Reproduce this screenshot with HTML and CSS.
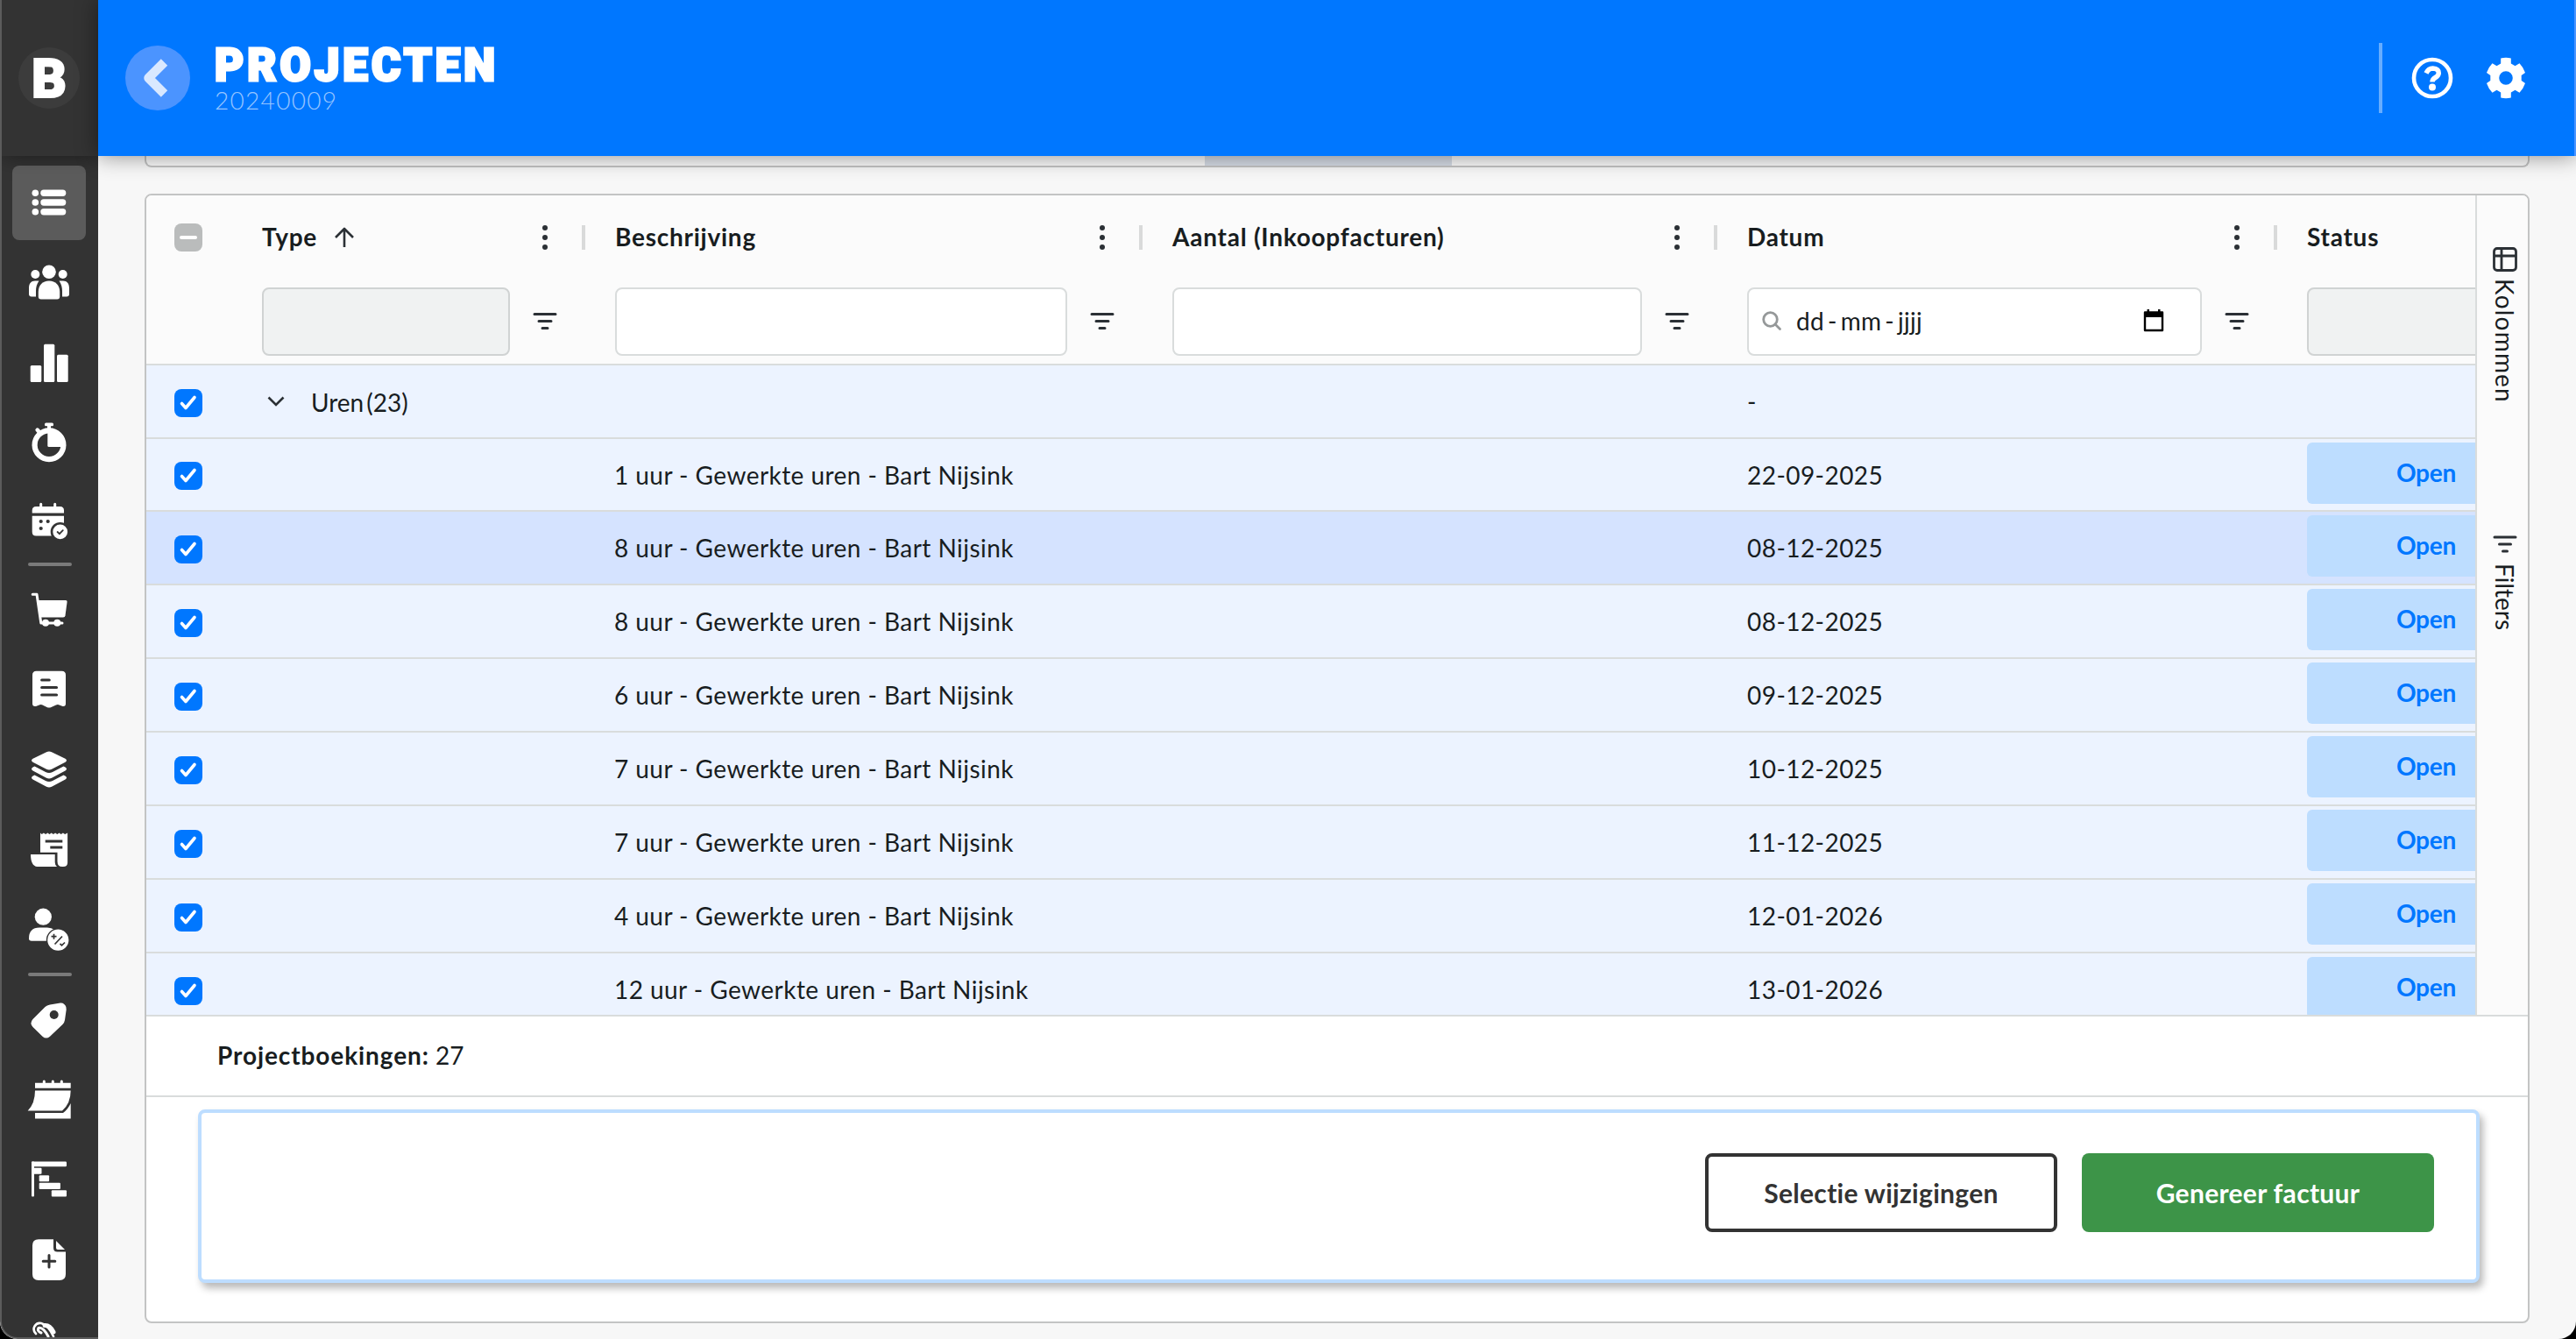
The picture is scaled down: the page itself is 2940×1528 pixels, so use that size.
FILE: index.html
```html
<!DOCTYPE html>
<html lang="nl">
  <head>
    <meta charset="utf-8" />
    <meta name="viewport" content="width=device-width, initial-scale=1" />
    <title>Projecten - 20240009</title>
    <link rel="stylesheet" href="styles.css">
  </head>
  <body>
    <!-- Shared icons -->
    <svg class="icon-defs" xmlns="http://www.w3.org/2000/svg">
      <symbol id="icon-check" viewBox="0 0 32 32">
        <path d="M8.5 16.5l4.5 5 10-12" fill="none" stroke="#fff" stroke-width="3.6" stroke-linecap="round" stroke-linejoin="round"></path>
      </symbol>
      <symbol id="icon-menu" viewBox="0 0 32 32">
        <g fill="#2b3035"><circle cx="16" cy="5" r="3"></circle><circle cx="16" cy="16" r="3"></circle><circle cx="16" cy="27" r="3"></circle></g>
      </symbol>
      <symbol id="icon-filter" viewBox="0 0 32 32">
        <path d="M4 8.5h24M9 16.5h14M13 24.5h6" fill="none" stroke="#2b3035" stroke-width="3" stroke-linecap="round"></path>
      </symbol>
    </svg>

    <div class="app">
      <aside class="sidebar">
        <div class="brand"><div class="brand-logo">B</div></div>
        <nav class="nav">
          <a class="nav-item active">
            <svg viewBox="0 0 84 84"><circle cx="26.3" cy="31.3" r="3.8"/><circle cx="26.3" cy="42" r="3.8"/><circle cx="26.3" cy="52.7" r="3.8"/><rect x="32.3" y="27.6" width="29" height="7.4" rx="3.7"/><rect x="32.3" y="38.3" width="29" height="7.4" rx="3.7"/><rect x="32.3" y="49" width="29" height="7.4" rx="3.7"/></svg>
          </a>
          <a class="nav-item">
            <svg viewBox="0 0 84 84"><circle cx="42" cy="30.2" r="7.8"/><circle cx="26.3" cy="33" r="5"/><circle cx="57.7" cy="33" r="5"/><path d="M29.8 58.500V53C29.800 45.500 34.500 40.400 42 40.400S54.200 45.500 54.200 53V58.500Q54.200 61.500 51.200 61.500H32.800Q29.800 61.500 29.800 58.500Z"/><path d="M30.500 40.600C28 44 27 48 27 52V58.600H22Q19 58.600 19 55.600V49C19 43.500 21.500 40.600 26 40.600ZM53.500 40.600C56 44 57 48 57 52V58.600H62Q65 58.600 65 55.600V49C65 43.500 62.500 40.600 58 40.600Z"/></svg>
          </a>
          <a class="nav-item">
            <svg viewBox="0 0 84 84"><rect x="20.700" y="45" width="12.600" height="19" rx="1.500"/><rect x="36" y="20.700" width="12.300" height="43.300" rx="1.500"/><rect x="51" y="32.700" width="12.700" height="31.300" rx="1.500"/></svg>
          </a>
          <a class="nav-item">
            <svg viewBox="0 0 84 84"><circle cx="42" cy="44.700" r="16.400" fill="none" stroke="#fff" stroke-width="6.200"/><path d="M40.300 30V45.500Q40.300 47 41.800 47H57V38L50 30Z"/><rect x="37" y="19.600" width="10" height="3.600" rx="1.500"/><path d="M40 22h4v6h-4z"/><path d="M28.600 27.600l3 3.400" stroke="#fff" stroke-width="4.500" stroke-linecap="round"/></svg>
          </a>
          <a class="nav-item">
            <svg viewBox="0 0 84 84"><path d="M22.700 31.400V28.500Q22.700 24 27.200 24H54.500Q59 24 59 28.500V31.400ZM22.700 34.800H59V57.400H27.200Q22.700 57.400 22.700 52.900Z"/><path d="M32.700 21.200V27M48.700 21.200V27" stroke="#fff" stroke-width="3" stroke-linecap="round"/><g fill="#333"><circle cx="32.700" cy="41" r="2.100"/><circle cx="40.700" cy="41" r="2.100"/><circle cx="32.700" cy="49" r="2.100"/><circle cx="54.700" cy="52.900" r="11"/></g><circle cx="54.700" cy="52.900" r="8.400"/><path d="M51.600 53l2.300 2.200 3.900-4" fill="none" stroke="#333" stroke-width="1.800" stroke-linecap="round"/></svg>
          </a>
          <div class="nav-divider"></div>
          <a class="nav-item">
            <svg viewBox="0 0 84 84"><path d="M23.200 24.300H28L32.800 57H57" fill="none" stroke="#fff" stroke-width="3" stroke-linecap="round" stroke-linejoin="round"/><path d="M29.500 31H61Q62.800 31 62.600 32.800L60.500 48.500Q60.200 50.500 58 50.500H32Z"/><circle cx="38" cy="56.800" r="4"/><circle cx="51.300" cy="56.800" r="4"/></svg>
          </a>
          <a class="nav-item">
            <svg viewBox="0 0 84 84"><path d="M27.500 20.700H56.500Q61 20.700 61 25.200V58Q61 61.500 57.500 61L53 59.300Q51.500 58.800 50 59.500L44.500 62Q42 63 39.500 62L34.500 59.500Q33 58.800 31.500 59.300L27 61Q23 61.500 23 58V25.200Q23 20.700 27.500 20.700Z"/><path d="M33.700 31h8.500M33.700 39.500h16.800M33.700 48h16.800" stroke="#333" stroke-width="3.200" stroke-linecap="round"/></svg>
          </a>
          <a class="nav-item">
            <svg viewBox="0 0 84 84"><path d="M39 22.200Q42 20.700 45 22.200L60.500 29.800Q63.500 31.800 60.500 33.800L45 41.800Q42 43.200 39 41.800L23.500 33.800Q20.500 31.800 23.500 29.800Z"/><path d="M25.500 38.500L38 45Q42 46.800 46 45L58.500 38.500L60.500 39.500Q63.500 41.500 60.500 43.500L45 51.800Q42 53.200 39 51.800L23.500 43.500Q20.500 41.500 23.500 39.500Z"/><path d="M25.500 48.500L38 55Q42 56.800 46 55L58.500 48.500L60.500 49.500Q63.500 51.500 60.500 53.500L45 61.800Q42 63.200 39 61.800L23.500 53.500Q20.500 51.500 23.500 49.500Z"/></svg>
          </a>
          <a class="nav-item">
            <svg viewBox="0 0 84 84"><path d="M32 22.500l1.700 1.500 2.200-1.500 2.200 1.500 2.200-1.500 2.200 1.500 2.200-1.500 2.200 1.500 2.200-1.500 2.200 1.500 2.200-1.500 2.200 1.500 2.200-1.500 2.200 1.500 3-1.500V56.500Q63 61 58 61H57Q51.500 61 51.500 55V44.700H32Z"/><path d="M21 46.900H48.700V56Q48.700 59 51 61H28.500Q21 60 21 46.900Z"/><path d="M37.700 32.100h19.600M43.300 39h14" stroke="#333" stroke-width="3"/></svg>
          </a>
          <a class="nav-item">
            <svg viewBox="0 0 84 84"><circle cx="35.300" cy="27.200" r="9.600"/><path d="M19 52Q19 39.500 31 39.500H40Q45 39.500 48 42V54.700H22Q19 54.700 19 52Z"/><circle cx="52.300" cy="53.700" r="12.800" stroke="#333" stroke-width="1.400"/><path d="M44.500 49.700h6M47.500 46.700v6M48.500 58.500L57 49.500M54.500 57.800l2 2 3.500-3.300" fill="none" stroke="#333" stroke-width="1.700"/></svg>
          </a>
          <div class="nav-divider nav-divider-low"></div>
          <a class="nav-item">
            <svg viewBox="0 0 84 84"><path d="M37.500 27Q39.500 25 43 24.500L55 22.400Q57.500 22.200 59 23.700L60.500 25.200Q62 27 61.700 30L60 42Q59.500 45 57.500 47L43 60.700Q38.700 64.500 34.500 60.700L23.500 50Q19.500 45.500 23.500 41Z"/><circle cx="47.700" cy="36" r="5" fill="#333"/></svg>
          </a>
          <a class="nav-item">
            <svg viewBox="0 0 84 84"><path d="M26 22.700H66.700V28.800H26ZM26 31.400H66.700Q66.700 46 57 54.400H17.700Q26 46 26 31.400ZM26 57H58Q63.500 53 66.700 46V63.400H26Z"/><path d="M36.300 21v4M46.300 21v4M56.300 21v4" stroke="#fff" stroke-width="3" stroke-linecap="round"/></svg>
          </a>
          <a class="nav-item">
            <svg viewBox="0 0 84 84"><rect x="22" y="21.500" width="3" height="40" rx="1"/><rect x="22" y="21.500" width="40" height="5.800" rx="1.200"/><rect x="24" y="28.800" width="9.500" height="6.900" rx="1"/><rect x="30.700" y="37.200" width="11.400" height="7" rx="1"/><rect x="30.700" y="45.700" width="24.200" height="7.200" rx="1"/><rect x="44.800" y="54.300" width="17.200" height="7.200" rx="1"/></svg>
          </a>
          <a class="nav-item">
            <svg viewBox="0 0 84 84"><path d="M30 19.200H47V29Q47 33.500 51.500 33.500H61V59Q61 66 54 66H30Q23 66 23 59V26.200Q23 19.200 30 19.200Z"/><path d="M50 21L60 31H52Q50 31 50 29Z"/><path d="M42 37.500v13.600M35.200 44.300h13.600" stroke="#333" stroke-width="3" stroke-linecap="round"/></svg>
          </a>
          <a class="nav-item">
            <svg viewBox="0 0 84 84"><g fill="none" stroke="#fff" stroke-linecap="round"><path d="M27 35Q23 31 25.500 26.500T33 23Q41 25 47 38" stroke-width="2.600"/><path d="M33 34Q28 32 30 28.500Q35 27 41 38" stroke-width="3"/><path d="M37 25.500Q43 25 47 33" stroke-width="5"/></g></svg>
          </a>
        </nav>
      </aside>

      <div class="page">
        <header class="topbar">
          <a class="back-button">
            <svg width="74" height="74" viewBox="0 0 74 74"><path d="M44.500 19L26.500 37l18 18" fill="none" stroke="#d9e8ff" stroke-width="10.500" stroke-linejoin="round"></path></svg>
          </a>
          <div class="topbar-title">
            <h1>PROJECTEN</h1>
            <span>20240009</span>
          </div>
          <div class="topbar-actions">
            <svg width="48" height="48" viewBox="0 0 48 48"><circle cx="24" cy="24" r="21" fill="none" stroke="#fff" stroke-width="4.600"></circle><path d="M17 18.500Q19.500 13 24.500 13Q31.500 13.500 31.300 18.500Q31 21.500 27.500 23.500Q24 25.500 24 28.500" fill="none" stroke="#fff" stroke-width="5.500"></path><circle cx="24" cy="34.500" r="4" fill="#fff"></circle></svg>
            <svg width="48" height="48" viewBox="0 0 48 48"><path fill="#fff" fill-rule="evenodd" d="M18.200 1.500Q24 .200 29.800 1.500V7.500L34.500 10.200L39.500 7.300Q44 12 46 18L41.700 21V27L46 30Q44 36 39.500 40.700L34.500 37.800L29.800 40.500V46.500Q24 47.800 18.200 46.500V40.500L13.500 37.800L8.500 40.700Q4 36 2 30L6.300 27V21L2 18Q4 12 8.500 7.300L13.500 10.200L18.200 7.500ZM24 16.200A7.800 7.800 0 1 0 24 31.800A7.800 7.800 0 1 0 24 16.200Z"></path></svg>
          </div>
        </header>

        <main class="content">
          <div class="tabs-card"><div class="tab-active"></div></div>

          <section class="grid-card">
            <div class="grid">
              <div class="grid-table">
                <div class="grid-header">
                  <div class="header-row">
                    <div class="col-check"><span class="checkbox mixed"></span></div>
                    <div class="col-type head"><span>Type</span>
                      <svg class="sort-icon" width="24" height="24" viewBox="0 0 24 24"><path d="M12 23V2M2 12L12 2l10 10" fill="none" stroke="#2b3035" stroke-width="2.600" stroke-linejoin="round"></path></svg>
                      <svg class="menu-icon"><use href="#icon-menu"/></svg><i></i></div>
                    <div class="col-desc head"><span>Beschrijving</span><svg class="menu-icon"><use href="#icon-menu"/></svg><i></i></div>
                    <div class="col-amount head"><span>Aantal (Inkoopfacturen)</span><svg class="menu-icon"><use href="#icon-menu"/></svg><i></i></div>
                    <div class="col-date head"><span>Datum</span><svg class="menu-icon"><use href="#icon-menu"/></svg><i></i></div>
                    <div class="col-status head"><span>Status</span></div>
                  </div>
                  <div class="header-row">
                    <div class="col-check"></div>
                    <div class="col-type filter"><div class="input disabled"></div><svg><use href="#icon-filter"/></svg></div>
                    <div class="col-desc filter"><div class="input"></div><svg><use href="#icon-filter"/></svg></div>
                    <div class="col-amount filter"><div class="input"></div><svg><use href="#icon-filter"/></svg></div>
                    <div class="col-date filter">
                      <div class="input date-input">
                        <svg width="24" height="24" viewBox="0 0 24 24"><circle cx="10.500" cy="10.500" r="7.800" fill="none" stroke="#959899" stroke-width="2.800"></circle><path d="M16 16l5.500 5.500" stroke="#959899" stroke-width="2.800" stroke-linecap="round"></path></svg>
                        <span class="date-text">dd<b>-</b>mm<b>-</b>jjjj</span>
                        <svg class="date-picker" width="24" height="26" viewBox="0 0 24 26"><path d="M2 3.500H22V24H2Z" fill="none" stroke="#000" stroke-width="2.400" stroke-linejoin="round"></path><path d="M1 3H23V9H1ZM4.500 0H7V4H4.500ZM17 0H19.500V4H17Z"></path></svg>
                      </div>
                      <svg><use href="#icon-filter"/></svg>
                    </div>
                    <div class="col-status filter"><div class="input disabled"></div></div>
                  </div>
                </div>

                <div class="grid-body">
                  <div class="row">
                    <div class="col-check"><svg class="checkbox"><use href="#icon-check"/></svg></div>
                    <div class="col-type group"><svg width="20" height="12" viewBox="0 0 20 12"><path d="M1.500 1.500L10 10l8.500-8.500" fill="none" stroke="#2b3035" stroke-width="2.600"></path></svg><span>Uren (23)</span></div>
                    <div class="col-desc"></div>
                    <div class="col-amount"></div>
                    <div class="col-date">-</div>
                    <div class="col-status"></div>
                  </div>
                  <div class="row">
                    <div class="col-check"><svg class="checkbox"><use href="#icon-check"/></svg></div>
                    <div class="col-type"></div>
                    <div class="col-desc">1 uur - Gewerkte uren - Bart Nijsink</div>
                    <div class="col-amount"></div>
                    <div class="col-date">22-09-2025</div>
                    <div class="col-status"><span class="status">Open</span></div>
                  </div>
                  <div class="row hover">
                    <div class="col-check"><svg class="checkbox"><use href="#icon-check"/></svg></div>
                    <div class="col-type"></div>
                    <div class="col-desc">8 uur - Gewerkte uren - Bart Nijsink</div>
                    <div class="col-amount"></div>
                    <div class="col-date">08-12-2025</div>
                    <div class="col-status"><span class="status">Open</span></div>
                  </div>
                  <div class="row">
                    <div class="col-check"><svg class="checkbox"><use href="#icon-check"/></svg></div>
                    <div class="col-type"></div>
                    <div class="col-desc">8 uur - Gewerkte uren - Bart Nijsink</div>
                    <div class="col-amount"></div>
                    <div class="col-date">08-12-2025</div>
                    <div class="col-status"><span class="status">Open</span></div>
                  </div>
                  <div class="row">
                    <div class="col-check"><svg class="checkbox"><use href="#icon-check"/></svg></div>
                    <div class="col-type"></div>
                    <div class="col-desc">6 uur - Gewerkte uren - Bart Nijsink</div>
                    <div class="col-amount"></div>
                    <div class="col-date">09-12-2025</div>
                    <div class="col-status"><span class="status">Open</span></div>
                  </div>
                  <div class="row">
                    <div class="col-check"><svg class="checkbox"><use href="#icon-check"/></svg></div>
                    <div class="col-type"></div>
                    <div class="col-desc">7 uur - Gewerkte uren - Bart Nijsink</div>
                    <div class="col-amount"></div>
                    <div class="col-date">10-12-2025</div>
                    <div class="col-status"><span class="status">Open</span></div>
                  </div>
                  <div class="row">
                    <div class="col-check"><svg class="checkbox"><use href="#icon-check"/></svg></div>
                    <div class="col-type"></div>
                    <div class="col-desc">7 uur - Gewerkte uren - Bart Nijsink</div>
                    <div class="col-amount"></div>
                    <div class="col-date">11-12-2025</div>
                    <div class="col-status"><span class="status">Open</span></div>
                  </div>
                  <div class="row">
                    <div class="col-check"><svg class="checkbox"><use href="#icon-check"/></svg></div>
                    <div class="col-type"></div>
                    <div class="col-desc">4 uur - Gewerkte uren - Bart Nijsink</div>
                    <div class="col-amount"></div>
                    <div class="col-date">12-01-2026</div>
                    <div class="col-status"><span class="status">Open</span></div>
                  </div>
                  <div class="row">
                    <div class="col-check"><svg class="checkbox"><use href="#icon-check"/></svg></div>
                    <div class="col-type"></div>
                    <div class="col-desc">12 uur - Gewerkte uren - Bart Nijsink</div>
                    <div class="col-amount"></div>
                    <div class="col-date">13-01-2026</div>
                    <div class="col-status"><span class="status">Open</span></div>
                  </div>
                </div>
              </div>

              <div class="side-tabs">
                <div class="side-tab">
                  <svg width="28" height="28" viewBox="0 0 28 28"><rect x="1.500" y="1.500" width="25" height="25" rx="3.500" fill="none" stroke="#2b3035" stroke-width="2.800"></rect><path d="M1 10H27M10 2V27" stroke="#2b3035" stroke-width="2.800" fill="none"></path></svg>
                  <span>Kolommen</span>
                </div>
                <div class="side-tab side-tab-filters">
                  <svg width="28" height="20" viewBox="0 0 28 20"><path d="M2 2h24M7.500 10h13M11.500 18h5" stroke="#2b3035" stroke-width="3" stroke-linecap="round"></path></svg>
                  <span>Filters</span>
                </div>
              </div>
            </div>

            <div class="grid-status"><strong>Projectboekingen:</strong> 27</div>

            <div class="action-bar">
              <button class="btn btn-outline">Selectie wijzigingen</button>
              <button class="btn btn-success">Genereer factuur</button>
            </div>
          </section>
        </main>
      </div>
    </div>
  </body>
</html>
```
FILE: styles.css
```css
:root {
  --color-primary: #0077ff;
  --color-dark: #333333;
  --color-text: #181d1f;
  --color-border: #d9dcdc;
  --color-selected: #ecf3ff;
  --color-open: #bdddff;
}

* {
  box-sizing: border-box;
}

html {
  background: #000;
}

body {
  margin: 0;
  height: 1528px;
  overflow: hidden;
  font-family: Lato, 'Open Sans', sans-serif;
  font-size: 28px;
  color: var(--color-text);
}

.icon-defs {
  display: none;
}

svg {
  display: block;
  flex-shrink: 0;
}

.app {
  display: flex;
  height: 1528px;
  background: #f7f7f7;
  border-radius: 0 0 20px 20px;
  overflow: hidden;
}

/* Sidebar */
.sidebar {
  display: flex;
  flex-direction: column;
  width: 112px;
  flex-shrink: 0;
  background: var(--color-dark);
  border-left: 2px solid #5c5c5c;
  border-bottom: 2px solid #5c5c5c;
  border-bottom-left-radius: 20px;
  overflow: hidden;
}

.brand {
  display: flex;
  align-items: center;
  justify-content: center;
  height: 178px;
  flex-shrink: 0;
  padding-right: 2px;
  background: var(--color-dark);
  box-shadow: 0 0 24px rgba(0, 0, 0, 0.45);
}

.brand-logo {
  width: 70px;
  height: 70px;
  border-radius: 50%;
  background: #3c3c3c;
  color: #fff;
  font: 900 62px/72px Roboto, sans-serif;
  text-align: center;
  -webkit-text-stroke: 2px #fff;
}

.nav {
  display: flex;
  flex-direction: column;
  align-items: center;
  padding: 11px 2px 0 0;
}

.nav-item {
  height: 85px;
  flex-shrink: 0;
  margin-bottom: 6.25px;
  border-radius: 8px;
}

.nav-item.active {
  background: rgba(255, 255, 255, 0.2);
}

.nav-item svg {
  width: 84px;
  height: 84px;
  fill: #fff;
}

.nav-divider {
  width: 50px;
  height: 4px;
  flex-shrink: 0;
  margin: -3px 0 7.5px 2px;
  border-radius: 2px;
  background: #7a7a7a;
}

.nav-divider-low {
  margin-top: 0;
}

/* Top bar */
.page {
  display: flex;
  flex-direction: column;
  flex: 1;
  min-width: 0;
}

.topbar {
  display: flex;
  align-items: center;
  height: 178px;
  flex-shrink: 0;
  padding: 0 54px 0 31px;
  background: var(--color-primary);
  border-right: 2px solid #4a94ff;
  box-shadow: 0 0 24px rgba(0, 0, 0, 0.45);
  z-index: 1;
  color: #fff;
}

.back-button {
  width: 74px;
  height: 74px;
  border-radius: 50%;
  background: #4b94ff;
}

.topbar-title {
  display: flex;
  flex-direction: column;
  margin-left: 28px;
  padding-top: 2px;
}

.topbar-title h1 {
  margin: 0;
  font: 900 51px/48px Roboto, sans-serif;
  -webkit-text-stroke: 3px #fff;
  letter-spacing: 4px;
}

.topbar-title span {
  font-size: 28px;
  line-height: 31px;
  color: #96c4ff;
  font-weight: 300;
  letter-spacing: 1.3px;
}

.topbar-actions {
  display: flex;
  align-items: center;
  gap: 36px;
  height: 80px;
  margin-left: auto;
  padding-left: 33px;
  border-left: 4px solid #66adff;
}

/* Content */
.content {
  display: flex;
  flex-direction: column;
  flex: 1;
  padding: 0 53px 18px;
}

.tabs-card {
  height: 13px;
  flex-shrink: 0;
  padding-left: 1208px;
  background: #fbfbfb;
  border: 2px solid #c3c4c4;
  border-top: 0;
  border-radius: 0 0 8px 8px;
}

.tab-active {
  width: 282px;
  height: 11px;
  background: #d6dce6;
}

.grid-card {
  display: flex;
  flex-direction: column;
  flex: 1;
  margin-top: 30px;
  background: #fff;
  border: 2px solid #c3c4c4;
  border-radius: 8px;
  overflow: hidden;
}

.grid {
  display: flex;
  height: 937px;
  flex-shrink: 0;
  border-bottom: 2px solid var(--color-border);
  background: #fbfbfb;
}

.grid-table {
  flex: 1;
  min-width: 0;
  overflow: hidden;
}

.grid-header {
  border-bottom: 2px solid var(--color-border);
}

.header-row,
.row {
  display: flex;
  width: 2800px;
}

.header-row {
  height: 96px;
}

.header-row > div,
.row > div {
  display: flex;
  align-items: center;
  flex-shrink: 0;
  padding-left: 35px;
  white-space: nowrap;
}

.header-row > .col-check,
.row > .col-check {
  width: 97px;
  padding-left: 32px;
}

.col-type {
  width: 403px;
}

.col-desc {
  width: 636px;
}

.col-amount {
  width: 656px;
}

.col-date {
  width: 639px;
}

.col-status {
  width: 342px;
}

.head {
  font-weight: 700;
  letter-spacing: 0.75px;
}

.head span {
  margin-bottom: 3px;
}

.head .sort-icon {
  margin-left: 19px;
}

.head .menu-icon {
  width: 32px;
  height: 32px;
  margin-left: auto;
}

.head i {
  width: 4px;
  height: 28px;
  margin-left: 26px;
  margin-right: -1px;
  background: #d9dada;
}

.filter svg {
  width: 32px;
  height: 32px;
  margin: 0 29px 2px 24px;
}

.filter .input {
  flex: 1;
  height: 78px;
  background: #fff;
  border: 2px solid var(--color-border);
  border-radius: 8px;
}

.filter .input.disabled {
  background: #f0f2f2;
  border-color: #d0d3d3;
}

.filter .date-input {
  display: flex;
  align-items: center;
  padding: 0 41px 2px 14px;
}

.filter .date-input svg {
  width: 24px;
  height: 26px;
  margin: 0;
}

.filter .date-input .date-picker {
  margin-left: auto;
}

.date-text {
  margin-left: 16px;
  letter-spacing: 0.3px;
}

.date-text b {
  font-weight: 400;
  margin: 0 4px;
}

.checkbox {
  width: 32px;
  height: 32px;
  border-radius: 8px;
  background: var(--color-primary);
}

.row .checkbox {
  margin-top: 3px;
}

.checkbox.mixed {
  display: flex;
  align-items: center;
  justify-content: center;
  background: #babcbc;
}

.checkbox.mixed::before {
  content: '';
  width: 20px;
  height: 4px;
  border-radius: 2px;
  background: #fff;
}

.row {
  height: 84px;
  background: var(--color-selected);
  border-bottom: 2px solid var(--color-border);
  letter-spacing: 0.45px;
}

.row:nth-child(2) {
  height: 83px;
}

.row.hover {
  background: #d5e3ff;
}

.row > .col-desc {
  padding-left: 34px;
}

.row .group {
  padding-left: 41px;
}

.group span {
  margin: 2px 0 0 30px;
  word-spacing: -4px;
  letter-spacing: 0;
}

.row > .col-status {
  align-items: flex-start;
  padding-top: 4px;
}

.status {
  width: 272px;
  height: 70px;
  border-radius: 6px;
  background: var(--color-open);
  color: var(--color-primary);
  font-weight: 700;
  line-height: 69px;
  letter-spacing: -0.2px;
  text-align: center;
}

/* Tool panel tabs */
.side-tabs {
  width: 60px;
  padding-top: 59px;
  border-left: 2px solid var(--color-border);
}

.side-tab {
  display: flex;
  flex-direction: column;
  align-items: center;
  padding-left: 6px;
}

.side-tab span {
  margin-top: 8px;
  writing-mode: vertical-rl;
  line-height: 34px;
  letter-spacing: 1.2px;
}

.side-tab-filters {
  margin-top: 151px;
}

.side-tab-filters span {
  margin-top: 12px;
  letter-spacing: 0;
}

/* Footer */
.grid-status {
  height: 92px;
  flex-shrink: 0;
  padding-left: 81px;
  border-bottom: 2px solid var(--color-border);
  line-height: 88px;
}

.grid-status strong {
  letter-spacing: 0.9px;
}

.action-bar {
  display: flex;
  align-items: center;
  justify-content: flex-end;
  gap: 28px;
  height: 198px;
  margin: 14px 55px 0 59px;
  padding: 0 48px 8px 0;
  background: #fff;
  border: 4px solid var(--color-open);
  border-radius: 8px;
  box-shadow: 4px 6px 8px rgba(0, 0, 0, 0.28);
}

.btn {
  width: 402px;
  height: 90px;
  border-radius: 8px;
  font: 700 30px Lato, sans-serif;
  letter-spacing: 0.3px;
}

.btn-outline {
  background: #fff;
  border: 4px solid var(--color-dark);
  color: var(--color-dark);
}

.btn-success {
  background: #3d9448;
  border: 0;
  color: #fff;
}
```
